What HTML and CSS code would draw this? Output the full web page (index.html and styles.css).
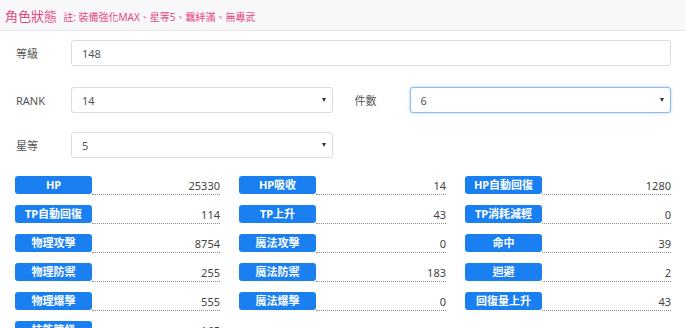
FILE: index.html
```html
<!DOCTYPE html>
<html lang="zh-Hant">
<head>
    <meta charset="UTF-8">
    <title>角色狀態</title>
    <link rel="stylesheet" href="styles.css">
</head>
<body>
    <header class="panel-head">
        <span class="panel-title">角色狀態</span>
        <span class="panel-note">註: 裝備強化MAX、星等5、羈絆滿、無專武</span>
    </header>

    <main class="panel-body">
        <form class="char-form">
            <div class="form-row first">
                <label for="level">等級</label>
                <input type="text" id="level" value="148" autocomplete="off">
            </div>
            <div class="form-grid">
                <div class="form-row">
                    <label for="rank">RANK</label>
                    <span class="select-wrap">
                        <select id="rank"><option>14</option></select>
                    </span>
                </div>
                <div class="form-row">
                    <label for="equip">件數</label>
                    <span class="select-wrap">
                        <select id="equip" class="focused"><option>6</option></select>
                    </span>
                </div>
            </div>
            <div class="form-grid">
                <div class="form-row">
                    <label for="star">星等</label>
                    <span class="select-wrap">
                        <select id="star"><option>5</option></select>
                    </span>
                </div>
            </div>
        </form>

        <section class="stats">
            <div class="stat"><span class="stat-name">HP</span><span class="stat-value">25330</span></div>
            <div class="stat"><span class="stat-name">HP吸收</span><span class="stat-value">14</span></div>
            <div class="stat"><span class="stat-name">HP自動回復</span><span class="stat-value">1280</span></div>

            <div class="stat"><span class="stat-name">TP自動回復</span><span class="stat-value">114</span></div>
            <div class="stat"><span class="stat-name">TP上升</span><span class="stat-value">43</span></div>
            <div class="stat"><span class="stat-name">TP消耗減輕</span><span class="stat-value">0</span></div>

            <div class="stat"><span class="stat-name">物理攻擊</span><span class="stat-value">8754</span></div>
            <div class="stat"><span class="stat-name">魔法攻擊</span><span class="stat-value">0</span></div>
            <div class="stat"><span class="stat-name">命中</span><span class="stat-value">39</span></div>

            <div class="stat"><span class="stat-name">物理防禦</span><span class="stat-value">255</span></div>
            <div class="stat"><span class="stat-name">魔法防禦</span><span class="stat-value">183</span></div>
            <div class="stat"><span class="stat-name">迴避</span><span class="stat-value">2</span></div>

            <div class="stat"><span class="stat-name">物理爆擊</span><span class="stat-value">555</span></div>
            <div class="stat"><span class="stat-name">魔法爆擊</span><span class="stat-value">0</span></div>
            <div class="stat"><span class="stat-name">回復量上升</span><span class="stat-value">43</span></div>

            <div class="stat"><span class="stat-name">技能等級</span><span class="stat-value">165</span></div>
        </section>
    </main>
</body>
</html>
```

FILE: styles.css
```css
* {
    box-sizing: border-box;
}

body {
    margin: 0;
    background: #fff;
    font-family: "Noto Sans", "Noto Sans CJK TC", sans-serif;
    color: #555;
    overflow: hidden;
}

.panel-head {
    height: 31px;
    padding: 4px 5px 0;
    background: #f8f8fa;
    border-bottom: 1px solid #e6e6e6;
    color: #e8447f;
    white-space: nowrap;
}

.panel-title {
    font-size: 13px;
}

.panel-note {
    font-size: 10px;
    margin-left: 2px;
}

.panel-body {
    padding: 9px 14px 0 15px;
}

.char-form {
    padding-left: 1px;
}

.form-row {
    display: flex;
    align-items: center;
    margin-bottom: 19px;
}

.form-row.first {
    margin-bottom: 21px;
}

.form-row label {
    width: 55px;
    flex: none;
    font-size: 11px;
    color: #555;
}

.form-grid {
    display: grid;
    grid-template-columns: 1fr 1fr;
    column-gap: 22px;
}

input[type="text"],
select {
    display: block;
    width: 100%;
    height: 26px;
    padding: 0 10px;
    font-family: inherit;
    font-size: 11px;
    color: #555;
    background: #fff;
    border: 1px solid #dcdcdc;
    border-radius: 3px;
    -webkit-appearance: none;
    appearance: none;
    outline: none;
}

.select-wrap {
    position: relative;
    flex: 1;
}

.select-wrap::after {
    content: "";
    position: absolute;
    right: 7px;
    top: 11px;
    border-left: 2px solid transparent;
    border-right: 2px solid transparent;
    border-top: 4px solid #333;
    pointer-events: none;
}

select.focused {
    border-color: #8fbde8;
    box-shadow: 0 0 3px rgba(80, 150, 220, .5);
}

.stats {
    display: grid;
    grid-template-columns: 205px 207px 206px;
    column-gap: 19px;
    row-gap: 11px;
    margin-top: -1px;
}

.stat {
    display: flex;
    align-items: flex-end;
    height: 18px;
}

.stat-name {
    width: 77px;
    height: 18px;
    flex: none;
    background: #1a80f2;
    color: #fff;
    border-radius: 3px;
    font-size: 11px;
    font-weight: bold;
    line-height: 18px;
    text-align: center;
}

.stat-value {
    flex: 1;
    text-align: right;
    font-size: 11px;
    color: #444;
    line-height: 16px;
    border-bottom: 1px dotted #8a8aa0;
    margin-bottom: -1px;
}
```
